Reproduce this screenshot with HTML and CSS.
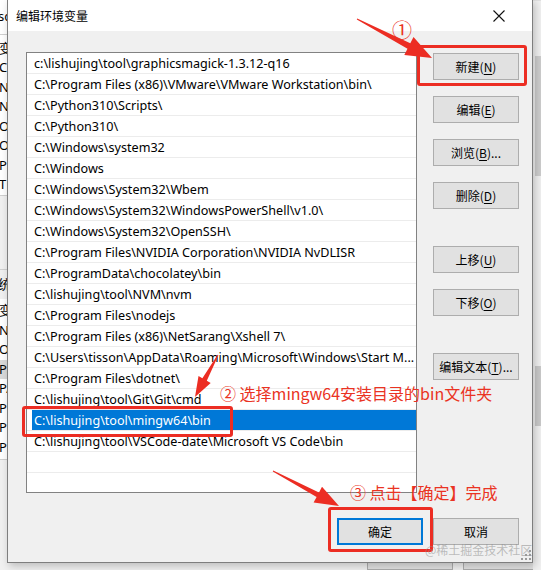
FILE: index.html
```html
<!DOCTYPE html>
<html lang="zh-CN">
<head>
<meta charset="utf-8">
<title>编辑环境变量</title>
<link rel="stylesheet" href="styles.css">
</head>
<body>
<div class="desktop">
  <div class="bgwin">
    <div class="bg-main">
      <div class="bg-head"><span class="bg-frag">sc</span></div>
      <div class="bg-list">
        <div class="bg-row">变</div>
        <div class="bg-row">Ch</div>
        <div class="bg-row">NV</div>
        <div class="bg-row">NV</div>
        <div class="bg-row">Or</div>
        <div class="bg-row">Or</div>
        <div class="bg-row">Pa</div>
        <div class="bg-row">TE</div>
      </div>
      <div class="bg-gap"></div>
      <div class="bg-label">统</div>
      <div class="bg-list bg-list2">
        <div class="bg-row">变</div>
        <div class="bg-row">NV</div>
        <div class="bg-row">OS</div>
        <div class="bg-row bg-sel">Pa</div>
        <div class="bg-row">PA</div>
        <div class="bg-row">PF</div>
        <div class="bg-row">PF</div>
        <div class="bg-row">PF</div>
      </div>
      <div class="bg-foot">
        <div class="bg-btn"></div>
        <div class="bg-btn"></div>
      </div>
    </div>
    <div class="bg-side">
      <div class="bg-thumb"></div>
      <div class="bg-thumb bg-thumb2"></div>
    </div>
  </div>

  <div class="dialog">
    <div class="titlebar">
      <span class="title">编辑环境变量</span>
      <svg class="close" width="12" height="12" viewBox="0 0 12 12"><path d="M0.5 0.5L11.5 11.5M11.5 0.5L0.5 11.5" stroke="#111" stroke-width="1.1" fill="none"/></svg>
    </div>
    <div class="body">
      <div class="list">
        <div class="row">c:\lishujing\tool\graphicsmagick-1.3.12-q16</div>
        <div class="row">C:\Program Files (x86)\VMware\VMware Workstation\bin\</div>
        <div class="row">C:\Python310\Scripts\</div>
        <div class="row">C:\Python310\</div>
        <div class="row">C:\Windows\system32</div>
        <div class="row">C:\Windows</div>
        <div class="row">C:\Windows\System32\Wbem</div>
        <div class="row">C:\Windows\System32\WindowsPowerShell\v1.0\</div>
        <div class="row">C:\Windows\System32\OpenSSH\</div>
        <div class="row">C:\Program Files\NVIDIA Corporation\NVIDIA NvDLISR</div>
        <div class="row">C:\ProgramData\chocolatey\bin</div>
        <div class="row">C:\lishujing\tool\NVM\nvm</div>
        <div class="row">C:\Program Files\nodejs</div>
        <div class="row">C:\Program Files (x86)\NetSarang\Xshell 7\</div>
        <div class="row">C:\Users\tisson\AppData\Roaming\Microsoft\Windows\Start M...</div>
        <div class="row">C:\Program Files\dotnet\</div>
        <div class="row">C:\lishujing\tool\Git\Git\cmd</div>
        <div class="row row-sel"><span class="sel">C:\lishujing\tool\mingw64\bin</span></div>
        <div class="row">C:\lishujing\tool\VSCode-date\Microsoft VS Code\bin</div>
        <div class="row"></div>
      </div>
      <div class="actions">
        <div class="btn">新建(<u>N</u>)</div>
        <div class="btn">编辑(<u>E</u>)</div>
        <div class="btn">浏览(<u>B</u>)...</div>
        <div class="btn">删除(<u>D</u>)</div>
        <div class="btn btn-sep">上移(<u>U</u>)</div>
        <div class="btn">下移(<u>O</u>)</div>
        <div class="btn btn-sep">编辑文本(<u>T</u>)...</div>
      </div>
    </div>
    <div class="footer">
      <div class="btn btn-default">确定</div>
      <div class="btn">取消</div>
    </div>
  </div>

  <svg class="arrows" width="541" height="570" viewBox="0 0 541 570">
    <polygon points="357.2,18.6 410.3,43.3 413.5,37.1 432,58 404.3,54.9 407.5,48.7 356.8,19.4" fill="#ec2d23"/>
    <polygon points="217.6,354.8 202.4,378.3 198.5,376.1 195,397 210.7,382.9 206.8,380.7 218.4,355.2" fill="#ec2d23"/>
    <polygon points="273.2,470.6 319,492.5 322,486.8 339,506 313.6,502.6 316.6,496.9 272.8,471.4" fill="#ec2d23"/>
  </svg>
  <div class="mark mark-new"></div>
  <div class="mark mark-row"></div>
  <div class="mark mark-ok"></div>
  <div class="note note1">①</div>
  <div class="note note2">② 选择mingw64安装目录的bin文件夹</div>
  <div class="note note3">③ 点击【确定】完成</div>
  <div class="watermark">@稀土掘金技术社区</div>
  <svg class="grip" width="10" height="10" viewBox="0 0 10 10">
    <rect x="8" y="0" width="2" height="2" fill="#9a9a9a"/>
    <rect x="4" y="4" width="2" height="2" fill="#9a9a9a"/>
    <rect x="8" y="4" width="2" height="2" fill="#9a9a9a"/>
    <rect x="0" y="8" width="2" height="2" fill="#9a9a9a"/>
    <rect x="4" y="8" width="2" height="2" fill="#9a9a9a"/>
    <rect x="8" y="8" width="2" height="2" fill="#9a9a9a"/>
  </svg>
</div>
</body>
</html>
```

FILE: styles.css
```css
* { box-sizing: border-box; }
html, body { margin: 0; padding: 0; }
body {
  width: 541px;
  height: 570px;
  overflow: hidden;
  font-family: "Noto Sans", "Noto Sans CJK SC", sans-serif;
  color: #000;
}
.desktop {
  position: relative;
  width: 541px;
  height: 570px;
  overflow: hidden;
  background: #f0f0f0;
}

/* background window */
.bgwin {
  position: absolute;
  inset: 0;
  display: flex;
}
.bg-main {
  flex: 1;
  display: flex;
  flex-direction: column;
  font-size: 13px;
  line-height: 19px;
}
.bg-head {
  height: 35px;
  background: #fff;
  border-bottom: 1px solid #d0d0d0;
  padding-top: 7px;
  margin-left: -2px;
}
.bg-list {
  background: #fff;
  display: flex;
  flex-direction: column;
  padding-top: 4px;
  border-bottom: 1px solid #cfcfcf;
}
.bg-row {
  height: 19.5px;
  white-space: nowrap;
  margin-left: -1px;
}
.bg-sel { background: #d9d9d9; }
.bg-gap { height: 74px; }
.bg-label {
  height: 30px;
  border-top: 1px solid #d0d0d0;
  padding-top: 5px;
  margin-left: -2px;
}
.bg-list2 { padding-top: 2px; padding-bottom: 2px; }
.bg-foot {
  display: flex;
  justify-content: flex-end;
  gap: 10px;
  padding-top: 84px;
  margin-right: -16px;
}
.bg-btn {
  width: 86px;
  height: 26px;
  background: #e1e1e1;
  border: 1px solid #adadad;
}
.bg-side {
  width: 8px;
  background: #f0f0f0;
  border-top: 1px solid #e0e0e0;
  display: flex;
  flex-direction: column;
  padding: 55px 0 0 2px;
}
.bg-thumb {
  height: 120px;
  background: #cdcdcd;
}
.bg-thumb2 {
  margin-top: 190px;
  height: 60px;
  background: #c9c9c9;
}

/* dialog */
.dialog {
  position: absolute;
  left: 7px;
  top: -1px;
  width: 526px;
  height: 564px;
  background: #f0f0f0;
  border: 1px solid #7e7e7e;
  box-shadow: 2px 3px 8px rgba(0, 0, 0, 0.22);
  display: flex;
  flex-direction: column;
}
.titlebar {
  height: 31px;
  background: #fff;
  display: flex;
  align-items: center;
  justify-content: space-between;
  padding: 0 27px 0 8px;
}
.title {
  font-family: "Noto Sans CJK SC", sans-serif;
  font-size: 12px;
  color: #000;
}
.body {
  display: flex;
  padding: 21px 13px 0 18px;
}
.list {
  width: 391px;
  height: 441px;
  background: #fff;
  border: 1px solid #828282;
  display: flex;
  flex-direction: column;
  font-size: 12.6px;
  overflow: hidden;
}
.row {
  height: 21px;
  flex: none;
  border-bottom: 1px solid #ececec;
  padding: 1px 0 0 7px;
  line-height: 20px;
  white-space: nowrap;
  overflow: hidden;
}
.row-sel { padding: 0 0 0 5px; }
.sel {
  display: block;
  height: 20px;
  background: #0078d7;
  color: #fff;
  padding: 1px 0 0 2px;
}
.actions {
  margin-left: 16px;
  margin-top: 1px;
  width: 86px;
  display: flex;
  flex-direction: column;
  gap: 16px;
}
.btn {
  width: 86px;
  height: 27px;
  background: #e1e1e1;
  border: 1px solid #adadad;
  display: flex;
  align-items: center;
  justify-content: center;
  font-size: 12px;
  font-family: "Noto Sans CJK SC", sans-serif;
  white-space: nowrap;
}
.btn u { text-underline-offset: 2px; }
.btn-sep { margin-top: 21px; }
.footer {
  display: flex;
  justify-content: flex-end;
  gap: 10px;
  padding: 25px 13px 0 0;
}
.btn-default { border: 2px solid #0078d7; }

/* annotations */
.arrows {
  position: absolute;
  left: 0;
  top: 0;
  pointer-events: none;
}
.mark {
  position: absolute;
  border: 3px solid #ec2d23;
  border-radius: 3px;
}
.mark-new { left: 417px; top: 45px; width: 110px; height: 41px; }
.mark-row { left: 22px; top: 406px; width: 211px; height: 31px; }
.mark-ok { left: 328px; top: 507px; width: 105px; height: 45px; }
.note {
  position: absolute;
  color: #ea3323;
  font-family: "Noto Sans CJK SC", sans-serif;
  white-space: nowrap;
  line-height: 1;
}
.note1 { left: 392px; top: 20px; font-size: 20px; }
.note2 { left: 220px; top: 385px; font-size: 16px; }
.note3 { left: 350px; top: 484px; font-size: 16px; }
.watermark {
  position: absolute;
  left: 425px;
  top: 541px;
  font-size: 12px;
  font-family: "Noto Sans CJK SC", sans-serif;
  color: rgba(140, 140, 140, 0.55);
  white-space: nowrap;
}
.grip {
  position: absolute;
  left: 521px;
  top: 550px;
}
```
